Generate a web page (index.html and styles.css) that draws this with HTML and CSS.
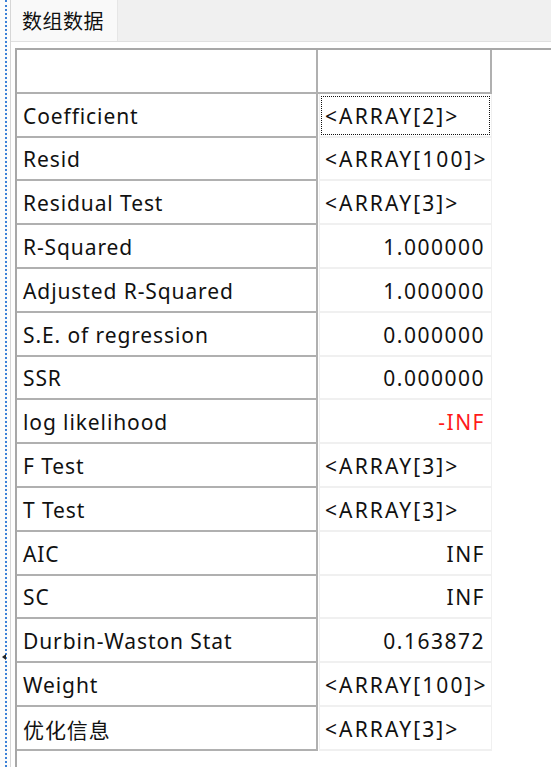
FILE: index.html
```html
<!DOCTYPE html>
<html lang="zh">
<head>
<meta charset="utf-8">
<link rel="stylesheet" href="styles.css">
</head>
<body>
<div class="gutter"><div class="dots"></div><span class="arrow"></span></div>
<div class="main">
  <div class="tabbar"><div class="tab">数组数据</div></div>
  <div class="content">
    <div class="grid">
      <div class="hc"></div><div class="hc"></div>
      <div class="rh">Coefficient</div><div class="dc arr focus">&lt;ARRAY[2]&gt;</div>
      <div class="rh">Resid</div><div class="dc arr">&lt;ARRAY[100]&gt;</div>
      <div class="rh">Residual Test</div><div class="dc arr">&lt;ARRAY[3]&gt;</div>
      <div class="rh">R-Squared</div><div class="dc num">1.000000</div>
      <div class="rh">Adjusted R-Squared</div><div class="dc num">1.000000</div>
      <div class="rh">S.E. of regression</div><div class="dc num">0.000000</div>
      <div class="rh">SSR</div><div class="dc num">0.000000</div>
      <div class="rh">log likelihood</div><div class="dc num neg">-INF</div>
      <div class="rh">F Test</div><div class="dc arr">&lt;ARRAY[3]&gt;</div>
      <div class="rh">T Test</div><div class="dc arr">&lt;ARRAY[3]&gt;</div>
      <div class="rh">AIC</div><div class="dc num">INF</div>
      <div class="rh">SC</div><div class="dc num">INF</div>
      <div class="rh">Durbin-Waston Stat</div><div class="dc num">0.163872</div>
      <div class="rh">Weight</div><div class="dc arr">&lt;ARRAY[100]&gt;</div>
      <div class="rh">优化信息</div><div class="dc arr">&lt;ARRAY[3]&gt;</div>
    </div>
  </div>
</div>
</body>
</html>
```
FILE: styles.css
```css
html, body {
  margin: 0;
  padding: 0;
}
body {
  width: 551px;
  height: 767px;
  overflow: hidden;
  display: flex;
  background: #ffffff;
  font-family: "Noto Sans", "Noto Sans CJK SC", sans-serif;
  color: #111;
}
.gutter {
  width: 11px;
  flex: none;
  position: relative;
  box-sizing: border-box;
  border-right: 1px solid #d6d6d6;
  background: #fbfbfb;
}
.dots {
  position: absolute;
  left: 5px;
  top: 0;
  bottom: 0;
  border-left: 2px dotted #3b80d6;
}
.arrow {
  position: absolute;
  left: 2px;
  top: 654px;
  width: 0;
  height: 0;
  border-top: 3px solid transparent;
  border-bottom: 3px solid transparent;
  border-right: 4px solid #222;
}
.main {
  flex: 1;
  display: flex;
  flex-direction: column;
  min-width: 0;
}
.tabbar {
  height: 41px;
  flex: none;
  display: flex;
  background: #f0f0f0;
  border-bottom: 1px solid #e0e0e0;
}
.tab {
  width: 107px;
  box-sizing: border-box;
  background: #f9f9f9;
  border-right: 1px solid #e6e6e6;
  padding-left: 11px;
  font-family: "Noto Sans CJK SC", sans-serif;
  font-size: 20px;
  letter-spacing: 0.5px;
  line-height: 41px;
  color: #111;
}
.content {
  flex: 1;
  padding: 6px 0 0 4px;
}
.grid {
  height: 100%;
  box-sizing: border-box;
  border-top: 2px solid #a8a8a8;
  border-left: 2px solid #a8a8a8;
  display: grid;
  grid-template-columns: 301px 174px;
  grid-auto-rows: 43.8px;
  align-content: start;
}
.hc, .rh {
  box-sizing: border-box;
  border-right: 2px solid #b0b0b0;
  border-bottom: 2px solid #b0b0b0;
  background: #fff;
}
.rh {
  padding: 2px 0 0 6px;
  font-size: 21px;
  letter-spacing: 0.9px;
  display: flex;
  align-items: center;
  white-space: nowrap;
}
.dc {
  position: relative;
  box-sizing: border-box;
  margin-left: 1px;
  border-left: 1px solid #f0f0f0;
  border-right: 1px solid #f0f0f0;
  border-bottom: 2px solid #f0f0f0;
  padding: 2px 7px 0 5px;
  font-size: 21px;
  letter-spacing: 0.9px;
  display: flex;
  align-items: center;
  white-space: nowrap;
}
.arr {
  letter-spacing: 2.1px;
}
.num {
  justify-content: flex-end;
  letter-spacing: 1.5px;
  padding-right: 6px;
}
.neg {
  color: #ff1a1a;
}
.focus::after {
  content: "";
  position: absolute;
  left: 1px;
  right: 1px;
  top: 2px;
  bottom: 1px;
  border: 1px dotted #111;
}
```
